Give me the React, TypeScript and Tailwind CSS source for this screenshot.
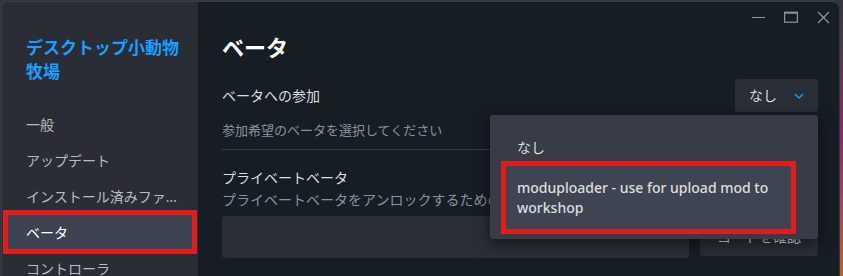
import React from 'react';

const FONT = '[font-family:"Noto_Sans","Noto_Sans_CJK_JP",sans-serif]';

const NAV = ['一般', 'アップデート', 'インストール済みファ…', 'ベータ', 'コントローラ'];

const WindowControls = () => (
  <div className="flex h-[30px] items-center justify-end gap-[19px] pr-[9px] text-[#8b96a1]">
    <svg width="13" height="12" viewBox="0 0 13 12">
      <line x1="0" y1="6.5" x2="13" y2="6.5" stroke="currentColor" strokeWidth="1.2" />
    </svg>
    <svg width="14" height="12" viewBox="0 0 14 12">
      <rect x="0.6" y="1.2" width="12.8" height="10" fill="none" stroke="currentColor" strokeWidth="1.2" />
      <line x1="0.6" y1="2" x2="13.4" y2="2" stroke="currentColor" strokeWidth="1.6" />
    </svg>
    <svg width="13" height="13" viewBox="0 0 13 13">
      <path d="M1 1 L12 12 M12 1 L1 12" stroke="currentColor" strokeWidth="1.3" />
    </svg>
  </div>
);

export default function App() {
  return (
    <div className={`flex h-[276px] w-[843px] overflow-hidden bg-[#33363b] ${FONT}`}>
      {/* window */}
      <div className="mt-[1px] ml-[1px] flex h-[275px] w-[838px] overflow-hidden rounded-t-[8px] border-t border-l border-[#3a3e46] bg-[#171d25]">
        {/* sidebar */}
        <div className="flex w-[196px] shrink-0 flex-col bg-[#2a2d35] pt-[34px]">
          <div className="pl-[24px] text-[17px] leading-[24px] font-bold text-[#1a9fff]">
            デスクトップ小動物
            <br />
            牧場
          </div>
          <div className="mt-[23px] flex flex-col gap-[2px]">
            {NAV.map((item) => (
              <div
                key={item}
                className={`mx-[6px] flex h-[34px] items-center px-[18px] text-[14px] whitespace-nowrap ${
                  item === 'ベータ'
                    ? 'bg-[#3d4350] text-white outline-[5px] outline-solid outline-[#e21b1b]'
                    : 'text-[#b8bcbf]'
                }`}
              >
                {item}
              </div>
            ))}
          </div>
        </div>

        {/* main */}
        <div className="flex flex-1 flex-col">
          <WindowControls />
          <div className="flex flex-col pr-[21px] pl-[24px]">
            <h1 className="text-[22px] leading-[30px] font-bold text-white">ベータ</h1>

            <div className="mt-[17px] flex h-[33px] items-center justify-between">
              <span className="text-[14px] text-[#dcdedf]">ベータへの参加</span>
              <div className="relative">
                <div className="flex h-[33px] w-[83px] items-center justify-between rounded-[3px] bg-[#2a2e36] pr-[14px] pl-[14px] text-[14px] text-[#dcdedf]">
                  なし
                  <svg width="10" height="6" viewBox="0 0 10 6">
                    <path d="M1 1 L5 5 L9 1" fill="none" stroke="#1a9fff" strokeWidth="1.4" />
                  </svg>
                </div>

                {/* dropdown */}
                <div className="absolute top-[36px] right-0 z-10 w-[328px] rounded-[3px] bg-[#383c46] pt-[13px] pb-[10px] shadow-[0_4px_16px_rgba(0,0,0,0.55)]">
                  <div className="flex h-[38px] items-center pl-[27px] text-[14px] text-[#dcdedf]">なし</div>
                  <div className="mr-[27px] ml-[16px] bg-[#3e4451] px-[11px] pt-[12px] pb-[11px] text-[14px] leading-[20px] font-medium whitespace-nowrap text-[#dcdedf] outline-[5px] outline-solid outline-[#e21b1b]">
                    moduploader - use for upload mod to
                    <br />
                    workshop
                  </div>
                </div>
              </div>
            </div>

            <p className="mt-[9px] text-[13px] leading-[18px] text-[#8b929a]">参加希望のベータを選択してください</p>

            <div className="mt-[10px] h-px bg-[#363b44]" />

            <div className="mt-[18px] text-[14px] leading-[20px] text-[#dcdedf]">プライベートベータ</div>
            <p className="mt-[2px] text-[14px] leading-[20px] whitespace-nowrap text-[#8b929a]">
              プライベートベータをアンロックするためのコードを入力してください
            </p>

            <div className="mt-[6px] flex gap-[11px]">
              <div className="h-[42px] flex-1 rounded-[3px] bg-[#2a2e36]" />
              <div className="flex h-[40px] w-[118px] items-center justify-center rounded-[3px] bg-[#2a2e36] text-[14px] text-[#dcdedf]">
                コードを確認
              </div>
            </div>
          </div>
        </div>
      </div>
      {/* desktop sliver on the right */}
      <div className="ml-[1px] h-full w-[3px] bg-gradient-to-b from-[#33363b] via-[#8a2a6a] to-[#c0602a]" />
    </div>
  );
}
